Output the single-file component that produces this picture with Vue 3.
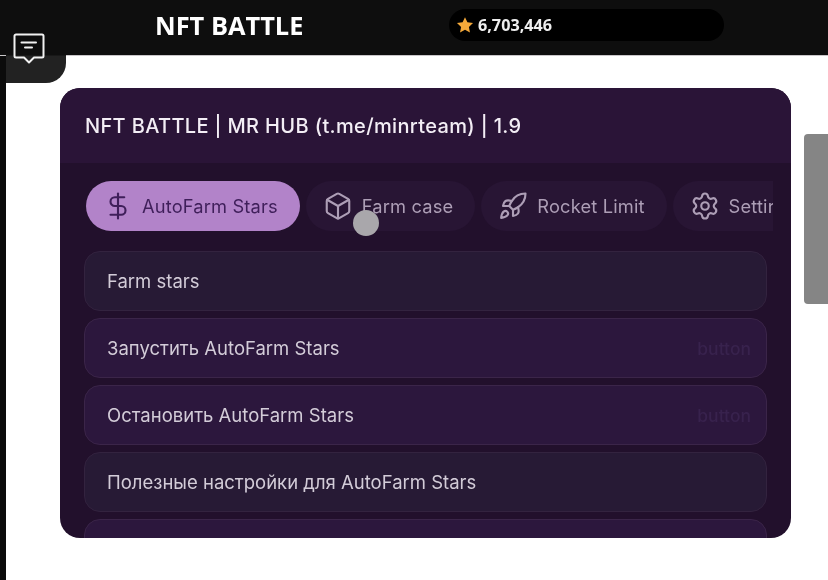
<template>
  <div class="page">
    <header class="topbar">
      <h1 class="app-title">NFT BATTLE</h1>
      <div class="balance">
        <svg class="star" viewBox="0 0 24 24"><path d="M12 1.5l3.2 6.9 7.5.9-5.5 5.2 1.4 7.5L12 18.3l-6.6 3.7 1.4-7.5L1.300 9.300l7.500-.9z" /></svg>
        <span>6,703,446</span>
      </div>
    </header>

    <button class="chat-tab">
      <svg viewBox="0 0 32 32" fill="none" stroke="#f2f2f2" stroke-width="2" stroke-linejoin="round" stroke-linecap="round">
        <path d="M3 1.500h26a1.500 1.500 0 0 1 1.500 1.500v20a1.500 1.500 0 0 1-1.500 1.500h-8l-5 5-5-5H3a1.500 1.500 0 0 1-1.500-1.500V3A1.500 1.500 0 0 1 3 1.500z" />
        <path d="M8.500 9.500h14.500M12 14.500h7" />
      </svg>
    </button>

    <main class="content">
      <section class="panel">
        <div class="panel-head">NFT BATTLE | MR HUB (t.me/minrteam) | 1.9</div>
        <div class="panel-body">
          <nav class="tabs">
            <div v-for="tab in tabs" :key="tab.label" class="tab" :class="{ active: tab.active }">
              <svg viewBox="0 0 24 24" fill="none" stroke="currentColor" stroke-width="1.700" stroke-linecap="round" stroke-linejoin="round">
                <path v-for="d in tab.paths" :key="d" :d="d" />
              </svg>
              <span>{{ tab.label }}</span>
            </div>
          </nav>
          <div class="rows">
            <div v-for="(row, index) in rows" :key="index" class="row" :class="row.kind">
              <span>{{ row.label }}</span>
              <span v-if="row.hint" class="hint">{{ row.hint }}</span>
            </div>
          </div>
        </div>
      </section>
      <div class="scroll-thumb"></div>
    </main>

    <div class="touch-dot"></div>
  </div>
</template>

<script setup>
const tabs = [
  {
    label: 'AutoFarm Stars',
    active: true,
    paths: ['M12 2v20', 'M17 5H9.500a3.500 3.500 0 0 0 0 7h5a3.500 3.500 0 0 1 0 7H6'],
  },
  {
    label: 'Farm case',
    paths: [
      'M21 8a2 2 0 0 0-1-1.730l-7-4a2 2 0 0 0-2 0l-7 4A2 2 0 0 0 3 8v8a2 2 0 0 0 1 1.730l7 4a2 2 0 0 0 2 0l7-4A2 2 0 0 0 21 16Z',
      'm3.300 7 8.700 5 8.700-5',
      'M12 22V12',
    ],
  },
  {
    label: 'Rocket Limit',
    paths: [
      'M4.500 16.500c-1.500 1.260-2 5-2 5s3.740-.5 5-2c.71-.84.7-2.130-.09-2.910a2.180 2.180 0 0 0-2.910-.09z',
      'm12 15-3-3a22 22 0 0 1 2-3.950A12.880 12.880 0 0 1 22 2c0 2.720-.78 7.500-6 11a22.350 22.350 0 0 1-4 2z',
      'M9 12H4s.55-3.030 2-4c1.620-1.080 5 0 5 0',
      'M12 15v5s3.030-.55 4-2c1.080-1.620 0-5 0-5',
    ],
  },
  {
    label: 'Settings',
    paths: [
      'M9.671 4.136a2.340 2.340 0 0 1 4.659 0 2.340 2.340 0 0 0 3.319 1.915 2.340 2.340 0 0 1 2.330 4.033 2.340 2.340 0 0 0 0 3.831 2.340 2.340 0 0 1-2.330 4.033 2.340 2.340 0 0 0-3.319 1.915 2.340 2.340 0 0 1-4.659 0 2.340 2.340 0 0 0-3.320-1.915 2.340 2.340 0 0 1-2.330-4.033 2.340 2.340 0 0 0 0-3.831A2.340 2.340 0 0 1 6.350 6.051a2.340 2.340 0 0 0 3.320-1.915',
      'M15 12a3 3 0 1 1-6 0 3 3 0 0 1 6 0',
    ],
  },
]

const rows = [
  { label: 'Farm stars', kind: 'label' },
  { label: 'Запустить AutoFarm Stars', kind: 'button', hint: 'button' },
  { label: 'Остановить AutoFarm Stars', kind: 'button', hint: 'button' },
  { label: 'Полезные настройки для AutoFarm Stars', kind: 'label' },
  { label: '', kind: 'button' },
]
</script>

<style>
html, body {
  margin: 0;
  background: #fff;
}
</style>

<style scoped>
.page {
  position: relative;
  width: 828px;
  height: 580px;
  overflow: hidden;
  display: flex;
  flex-direction: column;
  background: #fff;
  font-family: Inter, "Noto Sans", sans-serif;
  filter: blur(0.45px);
}

.topbar {
  height: 56px;
  flex: none;
  display: flex;
  align-items: center;
  padding-left: 155px;
  background: #0e0e0e;
  border-bottom: 1px solid #c9c6c9;
  box-sizing: border-box;
}

.app-title {
  width: 294px;
  margin: 0 0 6px;
  font-family: "Open Sans", sans-serif;
  font-size: 25.400px;
  font-weight: 700;
  color: #fff;
}

.balance {
  width: 275px;
  height: 32px;
  margin-bottom: 6px;
  display: flex;
  align-items: center;
  gap: 4px;
  padding-left: 7px;
  box-sizing: border-box;
  border-radius: 16px;
  background: #000;
  font-family: "Open Sans", sans-serif;
  font-size: 16.200px;
  font-weight: 700;
  color: #eeeeee;
}

.star {
  width: 18px;
  height: 18px;
  fill: #f5a93a;
}

.chat-tab {
  position: absolute;
  left: 6px;
  top: 33px;
  width: 60px;
  height: 50px;
  padding: 0;
  border: 0;
  border-bottom-right-radius: 20px;
  background: linear-gradient(#0e0e0e 0, #0e0e0e 22px, #222 23px);
}

.chat-tab svg {
  position: absolute;
  left: 7px;
  top: 0;
  width: 32px;
  height: 32px;
}

.content {
  flex: 1;
  position: relative;
  display: flex;
  align-items: flex-start;
  padding: 32px 0 0 54px;
  border-left: 6px solid #0b0b0b;
}

.panel {
  width: 731px;
  height: 450px;
  overflow: hidden;
  border-radius: 20px;
  background: #22102c;
  color: #efe9f2;
}

.panel-head {
  height: 75px;
  display: flex;
  align-items: center;
  padding-left: 25px;
  box-sizing: border-box;
  background: #2a1437;
  font-size: 20px;
  font-weight: 500;
  letter-spacing: 0.35px;
  color: #f3eef5;
}

.panel-body {
  padding: 18px 24px 0;
}

.tabs {
  display: flex;
  gap: 6px;
  width: 687px;
  overflow: hidden;
  margin-left: 2px;
}

.tab {
  flex: none;
  height: 50px;
  display: flex;
  align-items: center;
  gap: 9px;
  padding: 0 22px 0 17px;
  box-sizing: border-box;
  border-radius: 25px;
  background: #281534;
  font-size: 18.300px;
  letter-spacing: 0.15px;
  color: #ad9eb6;
}

.tab svg {
  width: 30px;
  height: 30px;
  flex: none;
}

.tab.active {
  background: #b283c9;
  color: #3f1f5a;
}

.rows {
  display: flex;
  flex-direction: column;
  gap: 7px;
  margin-top: 20px;
  width: 683px;
}

.row {
  flex: none;
  height: 60px;
  display: flex;
  align-items: center;
  justify-content: space-between;
  padding: 0 15px 0 22px;
  box-sizing: border-box;
  border: 1.500px solid #35203f;
  border-radius: 16px;
  font-size: 18.500px;
  color: #d3ccd8;
}

.row.label {
  background: #271a35;
  border-color: #33233f;
}

.row.button {
  background: #2c173d;
  border-color: #3b2549;
}

.hint {
  font-size: 17.500px;
  font-weight: 500;
  color: #38224d;
}

.scroll-thumb {
  position: absolute;
  right: 0;
  top: 78px;
  width: 24px;
  height: 170px;
  border-radius: 4px 0 0 4px;
  background: #858585;
}

.touch-dot {
  position: absolute;
  left: 353px;
  top: 210px;
  width: 26px;
  height: 26px;
  border-radius: 50%;
  background: #a9a7ab;
}
</style>
